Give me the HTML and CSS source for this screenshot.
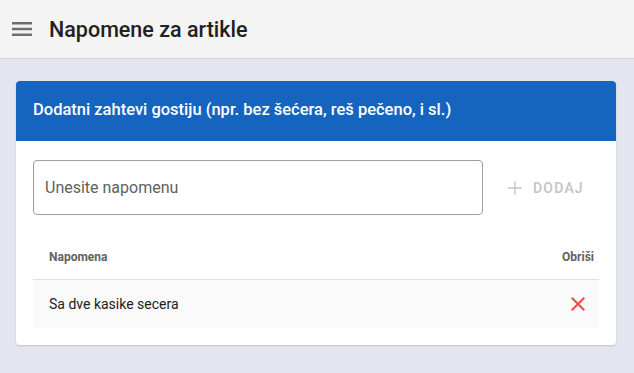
FILE: index.html
```html
<!DOCTYPE html>
<html lang="sr">
<head>
    <meta charset="UTF-8">
    <meta name="viewport" content="width=device-width, initial-scale=1.0">
    <link rel="stylesheet" href="styles.css">
    <title>Napomene za artikle</title>
</head>
<body>
    <div class="topbar">
        <button class="menuBtn" aria-label="Meni">
            <svg width="24" height="24" viewBox="0 0 24 24"><path d="M2 19h20v-2.4H2v2.4zm0-5.8h20v-2.4H2v2.4zm0-8.2v2.4h20V5H2z" fill="#6e6e6e"/></svg>
        </button>
        <h1 class="pageTitle">Napomene za artikle</h1>
    </div>

    <div class="content">
        <div class="card">
            <div class="cardHeader">Dodatni zahtevi gostiju (npr. bez šećera, reš pečeno, i sl.)</div>
            <div class="cardBody">
                <div class="addRow">
                    <input class="noteInput" placeholder="Unesite napomenu">
                    <button class="addBtn" disabled>
                        <svg width="20" height="20" viewBox="0 0 24 24"><path d="M20 12.8h-7.2V20h-1.6v-7.2H4v-1.6h7.2V4h1.6v7.2H20z" fill="#c4c4c4"/></svg>
                        DODAJ
                    </button>
                </div>
                <table class="notes">
                    <thead>
                        <tr><th>Napomena</th><th class="right">Obriši</th></tr>
                    </thead>
                    <tbody>
                        <tr>
                            <td>Sa dve kasike secera</td>
                            <td class="right">
                                <svg width="24" height="24" viewBox="0 0 24 24"><path d="M19 6.41L17.59 5 12 10.59 6.41 5 5 6.41 10.59 12 5 17.59 6.41 19 12 13.41 17.59 19 19 17.59 13.41 12z" fill="#f44848"/></svg>
                            </td>
                        </tr>
                    </tbody>
                </table>
            </div>
        </div>
    </div>
</body>
</html>
```

FILE: styles.css
```css
body{
    margin: 0;
    padding: 0;
    font-family: Roboto, "Liberation Sans", sans-serif;
    background-color: #e3e6ee;
    height: 373px;
}

.topbar{
    display: flex;
    align-items: center;
    height: 58px;
    background-color: #f4f4f5;
    border-bottom: 1px solid #d5d7de;
    padding-left: 10px;
}

.menuBtn{
    background: none;
    border: none;
    padding: 0;
    width: 24px;
    height: 24px;
    cursor: pointer;
}

.menuBtn svg{
    display: block;
}

.pageTitle{
    margin: 0 0 0 15px;
    font-size: 21.5px;
    font-weight: 500;
    color: #212121;
}

.content{
    padding: 22px 18px 22px 16px;
}

.card{
    background-color: white;
    border-radius: 4px;
    box-shadow: 0 1px 2px rgba(0, 0, 0, 0.15);
    overflow: hidden;
}

.cardHeader{
    background-color: #1565c0;
    color: white;
    height: 60px;
    line-height: 58px;
    padding-left: 17px;
    font-size: 16.5px;
    font-weight: 500;
}

.cardBody{
    padding: 19px 17px 17px 17px;
}

.addRow{
    display: flex;
    align-items: center;
}

.noteInput{
    width: 450px;
    height: 55px;
    box-sizing: border-box;
    border: 1px solid #9e9e9e;
    border-radius: 4px;
    padding: 0 11px;
    font-family: inherit;
    font-size: 16px;
    color: #212121;
}

.noteInput::placeholder{
    color: #616161;
}

.addBtn{
    display: flex;
    align-items: center;
    gap: 8px;
    margin-left: 22px;
    background: none;
    border: none;
    font-family: inherit;
    font-size: 14px;
    font-weight: 500;
    letter-spacing: 1.2px;
    color: #c4c4c4;
    padding: 0;
}

.notes{
    width: 100%;
    border-collapse: collapse;
    margin-top: 20px;
}

.notes th{
    text-align: left;
    font-size: 12px;
    font-weight: 700;
    color: #616161;
    height: 44px;
    padding: 0 16px 0 16px;
    border-bottom: 1px solid #e0e0e0;
}

.notes td{
    background-color: #fafafa;
    font-size: 14px;
    color: #212121;
    height: 48px;
    padding: 0 16px;
}

.notes .right{
    text-align: right;
    padding-right: 5px;
}

.notes td.right{
    padding-right: 9px;
}

.notes td svg{
    display: inline-block;
    vertical-align: middle;
}
```
